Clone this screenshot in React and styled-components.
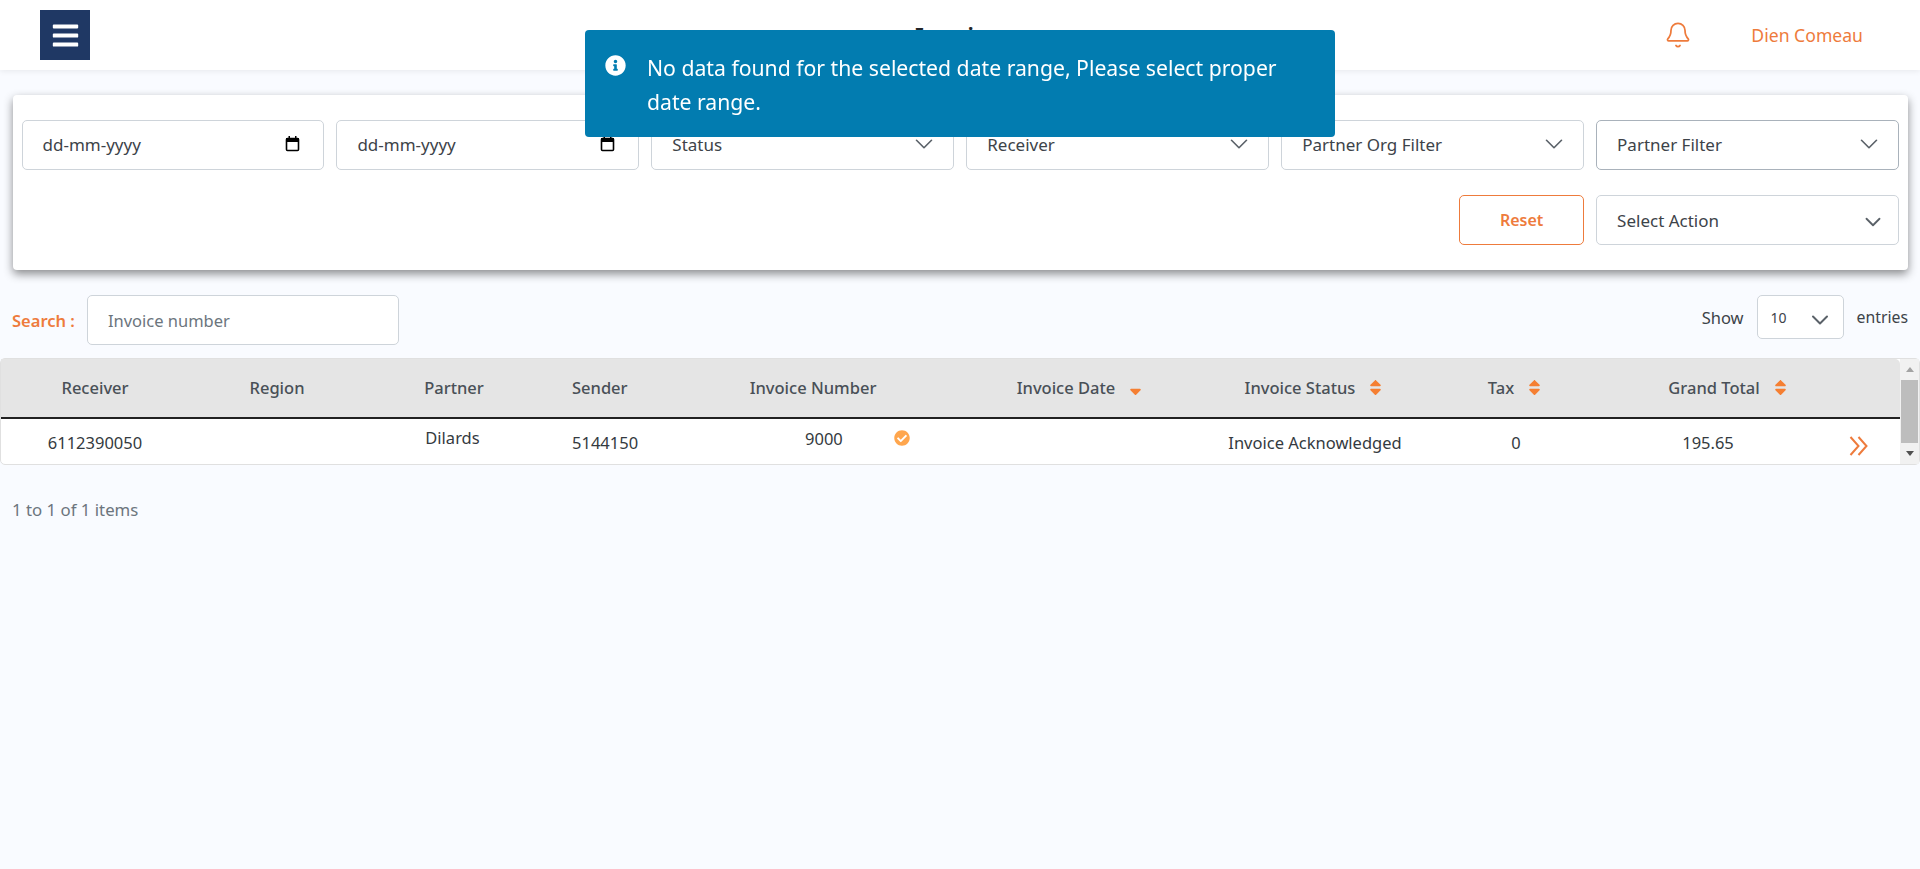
import React from "react";
import styled, { createGlobalStyle } from "styled-components";
import { FaBars, FaCheckCircle, FaInfoCircle, FaSort, FaSortDown } from "react-icons/fa";
import { Bell, ChevronDown } from "lucide-react";

const orange = "#ee7b3c";

const GlobalStyle = createGlobalStyle`
  html, body {
    margin: 0;
    padding: 0;
    background: #f9fbff;
    font-family: "Noto Sans", "Open Sans", sans-serif;
    color: #343a40;
    overflow: hidden;
  }
`;

const Page = styled.div`
  min-height: 100vh;
`;

const TopBar = styled.header`
  height: 70px;
  box-sizing: border-box;
  background: #fff;
  box-shadow: 0 1px 6px rgba(0, 0, 0, 0.08);
  display: grid;
  grid-template-columns: 1fr auto 1fr;
  align-items: center;
  padding: 0 57px 0 40px;
`;

const MenuButton = styled.button`
  width: 50px;
  height: 50px;
  border: 0;
  padding: 0;
  background: #1f3864;
  color: #fff;
  display: flex;
  align-items: center;
  justify-content: center;
  font-size: 29px;
`;

const Title = styled.h1`
  margin: 0 0 0 24px;
  font-size: 24px;
  font-weight: 600;
  color: #212529;
`;

const UserArea = styled.div`
  display: flex;
  justify-content: flex-end;
  align-items: center;
  gap: 59px;
  color: ${orange};
  font-size: 17.6px;
`;

const Toast = styled.div`
  position: fixed;
  top: 30px;
  left: 585px;
  width: 750px;
  height: 107px;
  box-sizing: border-box;
  padding: 21px 40px 0 20px;
  display: flex;
  gap: 21px;
  background: #027cb0;
  border-radius: 4px;
  color: #fff;
  font-size: 21.2px;
  line-height: 34px;
`;

const ToastIcon = styled(FaInfoCircle)`
  flex: none;
  font-size: 21px;
  margin-top: 4px;
`;

const FilterCard = styled.section`
  margin: 25px 12px 0 13px;
  padding: 25px 9px 25px 8.5px;
  background: #fff;
  border-radius: 4px;
  box-shadow: 0 4px 10px rgba(0, 0, 0, 0.45);
  display: grid;
  grid-template-columns: repeat(6, 1fr);
  column-gap: 12px;
  row-gap: 25px;
`;

const Field = styled.div`
  height: 50px;
  box-sizing: border-box;
  display: flex;
  align-items: center;
  justify-content: space-between;
  padding: 0 ${(p) => p.$right || 20}px ${(p) => (p.$lift ? 2 : 0)}px 20px;
  background: #fff;
  border: 1px solid ${(p) => (p.$active ? "#a9b2bb" : "#ced4da")};
  border-radius: 5px;
  font-size: 17px;
  color: #3d4349;
  grid-column: ${(p) => p.$column || "auto"};
`;

const Chevron = styled(ChevronDown)`
  flex: none;
  color: #5a6168;
  margin-top: ${(p) => p.$drop || 0}px;
`;

const CalendarIcon = () => (
  <svg width="16" height="18" viewBox="0 0 16 18" aria-hidden="true">
    <rect x="1.5" y="3.5" width="12" height="12" rx="1" fill="none" stroke="#000" strokeWidth="1.6" />
    <rect x="1" y="3" width="13" height="4" fill="#000" />
    <rect x="3.5" y="1" width="1.5" height="3" fill="#000" />
    <rect x="10" y="1" width="1.5" height="3" fill="#000" />
  </svg>
);

const DoubleArrow = styled.svg`
  color: ${orange};
  margin-top: 7px;
`;

const ResetButton = styled.button`
  grid-column: 5;
  justify-self: end;
  width: 125px;
  height: 50px;
  background: #fff;
  border: 1px solid ${orange};
  border-radius: 5px;
  color: ${orange};
  font-family: inherit;
  font-size: 16px;
  font-weight: 600;
`;

const SearchRow = styled.div`
  margin-top: 25px;
  padding: 0 12px;
  display: flex;
  align-items: flex-start;
  justify-content: space-between;
`;

const SearchGroup = styled.label`
  display: flex;
  align-items: center;
  gap: 12px;
  color: ${orange};
  font-size: 16.5px;
  font-weight: 600;
`;

const SearchInput = styled.input`
  width: 312px;
  height: 50px;
  box-sizing: border-box;
  padding: 0 20px;
  border: 1px solid #ced4da;
  border-radius: 5px;
  background: #fff;
  font-family: inherit;
  font-size: 16.5px;

  &::placeholder {
    color: #6c757d;
    opacity: 1;
  }
`;

const EntriesGroup = styled.div`
  display: flex;
  align-items: center;
  gap: 13px;
  font-size: 16.5px;
  color: #3d4349;
`;

const EntriesWord = styled.span`
  font-size: 15.8px;
`;

const EntriesSelect = styled.div`
  width: 87px;
  height: 44px;
  box-sizing: border-box;
  padding: 0 9px 0 13px;
  display: flex;
  align-items: center;
  justify-content: space-between;
  background: #fff;
  border: 1px solid #ced4da;
  border-radius: 5px;
  font-size: 14px;
`;

const TableWrap = styled.div`
  margin-top: 13px;
  display: flex;
  height: 107px;
  background: #fff;
  border: 1px solid #e0e0e0;
  border-radius: 5px;
  box-sizing: border-box;
`;

const TableBody = styled.div`
  flex: 1;
  min-width: 0;
`;

const columns = "188px 176px 182px 108px 316px 220px 248px 154px 238px 1fr";

const HeadRow = styled.div`
  height: 56px;
  padding-bottom: 2px;
  display: grid;
  grid-template-columns: ${columns};
  align-items: center;
  background: #e5e5e5;
  border-bottom: 2px solid #212121;
  border-top-right-radius: 5px;
  color: #495057;
  font-size: 16.5px;
  font-weight: 500;
`;

const HeadCell = styled.div`
  display: flex;
  align-items: center;
  justify-content: ${(p) => (p.$start ? "flex-start" : "center")};
  gap: 11px;
  padding-left: ${(p) => p.$left || 0}px;
  padding-right: ${(p) => p.$right || 0}px;
`;

const SortIcon = styled(FaSort)`
  color: #f57f32;
  font-size: 19px;
`;

const SortDownIcon = styled(FaSortDown)`
  color: #f57f32;
  font-size: 19px;
`;

const DataRow = styled.div`
  height: 46px;
  display: grid;
  grid-template-columns: ${columns};
  align-items: center;
  font-size: 16.5px;
  color: #343a40;
`;

const DataCell = styled.div`
  display: flex;
  align-items: center;
  justify-content: ${(p) => (p.$start ? "flex-start" : "center")};
  gap: ${(p) => p.$gap || 0}px;
  padding-left: ${(p) => p.$left || 0}px;
  padding-right: ${(p) => p.$right || 0}px;
  padding-bottom: ${(p) => p.$raise || 0}px;
`;

const AckIcon = styled(FaCheckCircle)`
  color: #ffa64d;
  font-size: 16px;
`;

const ScrollBar = styled.div`
  flex: none;
  width: 19px;
  background: #f1f1f1;
  display: flex;
  flex-direction: column;
  align-items: center;
  justify-content: space-between;
`;

const ScrollArrow = styled.div`
  width: 0;
  height: 0;
  margin: 8px 0;
  border-left: 4px solid transparent;
  border-right: 4px solid transparent;
  border-bottom: ${(p) => (p.$down ? "0" : "5px solid #a3a3a3")};
  border-top: ${(p) => (p.$down ? "5px solid #505050" : "0")};
`;

const ScrollThumb = styled.div`
  width: 17px;
  height: 63px;
  background: #bdbdbd;
`;

const Summary = styled.p`
  margin: 33px 0 0 12px;
  font-size: 16.8px;
  color: #6c757d;
`;

const heads = [
  { label: "Receiver" },
  { label: "Region" },
  { label: "Partner", right: 4 },
  { label: "Sender", start: true, left: 25 },
  { label: "Invoice Number" },
  { label: "Invoice Date", sort: "down" },
  { label: "Invoice Status", sort: "both" },
  { label: "Tax", sort: "both" },
  { label: "Grand Total", sort: "both", left: 34 },
  { label: "" },
];

const filters = ["Status", "Receiver", "Partner Org Filter"];

const App = () => {
  return (
    <Page>
      <GlobalStyle />
      <TopBar>
        <div>
          <MenuButton aria-label="Menu">
            <FaBars />
          </MenuButton>
        </div>
        <Title>Invoices</Title>
        <UserArea>
          <Bell size={28} strokeWidth={1.5} />
          <span>Dien Comeau</span>
        </UserArea>
      </TopBar>

      <Toast>
        <ToastIcon />
        <span>No data found for the selected date range, Please select proper date range.</span>
      </Toast>

      <FilterCard>
        <Field $right={22} $lift>
          dd-mm-yyyy
          <CalendarIcon />
        </Field>
        <Field $right={22} $lift>
          dd-mm-yyyy
          <CalendarIcon />
        </Field>
        {filters.map((name) => (
          <Field key={name} $right={14} $lift>
            {name}
            <Chevron size={30} strokeWidth={1.3} />
          </Field>
        ))}
        <Field $active $right={14} $lift>
          Partner Filter
          <Chevron size={30} strokeWidth={1.3} />
        </Field>
        <ResetButton>Reset</ResetButton>
        <Field $column="6" $right={12}>
          Select Action
          <Chevron size={26} strokeWidth={1.7} $drop={3} />
        </Field>
      </FilterCard>

      <SearchRow>
        <SearchGroup>
          Search :
          <SearchInput placeholder="Invoice number" />
        </SearchGroup>
        <EntriesGroup>
          Show
          <EntriesSelect>
            10
            <Chevron size={28} strokeWidth={1.7} $drop={6} />
          </EntriesSelect>
          <EntriesWord>entries</EntriesWord>
        </EntriesGroup>
      </SearchRow>

      <TableWrap>
        <TableBody>
          <HeadRow>
            {heads.map((h, i) => (
              <HeadCell key={i} $start={h.start} $left={h.left} $right={h.right}>
                {h.label}
                {h.sort === "both" && <SortIcon />}
                {h.sort === "down" && <SortDownIcon />}
              </HeadCell>
            ))}
          </HeadRow>
          <DataRow>
            <DataCell>6112390050</DataCell>
            <DataCell />
            <DataCell $right={7} $raise={9}>Dilards</DataCell>
            <DataCell $start $left={25}>5144150</DataCell>
            <DataCell $start $left={150} $gap={51} $raise={8}>
              9000
              <AckIcon />
            </DataCell>
            <DataCell />
            <DataCell>Invoice Acknowledged</DataCell>
            <DataCell>0</DataCell>
            <DataCell $right={8}>195.65</DataCell>
            <DataCell $start $left={18}>
              <DoubleArrow width="19" height="20" viewBox="0 0 19 20" fill="none" stroke="currentColor" strokeWidth="2">
                <path d="M1.5 1 L9.5 10 L1.5 19" />
                <path d="M9.5 1 L17.5 10 L9.5 19" />
              </DoubleArrow>
            </DataCell>
          </DataRow>
        </TableBody>
        <ScrollBar>
          <ScrollArrow />
          <ScrollThumb />
          <ScrollArrow $down />
        </ScrollBar>
      </TableWrap>

      <Summary>1 to 1 of 1 items</Summary>
    </Page>
  );
};

export default App;
